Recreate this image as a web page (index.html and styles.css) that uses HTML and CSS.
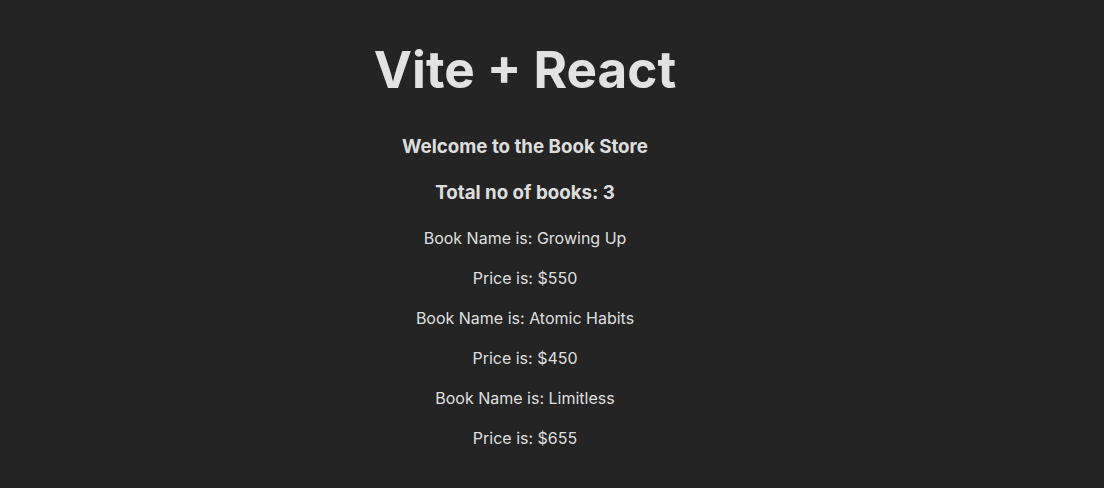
FILE: index.html
```html
<!DOCTYPE html>
<html lang="en">
<head>
<meta charset="UTF-8">
<title>Vite + React</title>
<link rel="stylesheet" href="styles.css">
</head>
<body>
<div class="root">
  <h1 class="title">Vite + React</h1>
  <h3 class="heading">Welcome to the Book Store</h3>
  <h3 class="heading">Total no of books: 3</h3>
  <p class="line">Book Name is: Growing Up</p>
  <p class="line">Price is: $550</p>
  <p class="line">Book Name is: Atomic Habits</p>
  <p class="line">Price is: $450</p>
  <p class="line">Book Name is: Limitless</p>
  <p class="line">Price is: $655</p>
</div>
</body>
</html>
```
FILE: styles.css
```css
html, body {
  margin: 0;
  padding: 0;
  background: #242424;
}
body {
  font-family: Inter, "Liberation Sans", sans-serif;
  line-height: 1.5;
  font-weight: 400;
  color: rgba(255, 255, 255, 0.87);
  font-size: 16px;
  overflow: hidden;
  height: 488px;
}
.root {
  padding: 41px 54px 0 0;
  text-align: center;
}
.title {
  font-size: 51.2px;
  line-height: 1.1;
  font-weight: 700;
  margin: 0 0 35.3px;
}
.heading {
  font-size: 18.72px;
  font-weight: 700;
  margin: 18.72px 0;
}
.line {
  margin: 16px 0;
}
```
